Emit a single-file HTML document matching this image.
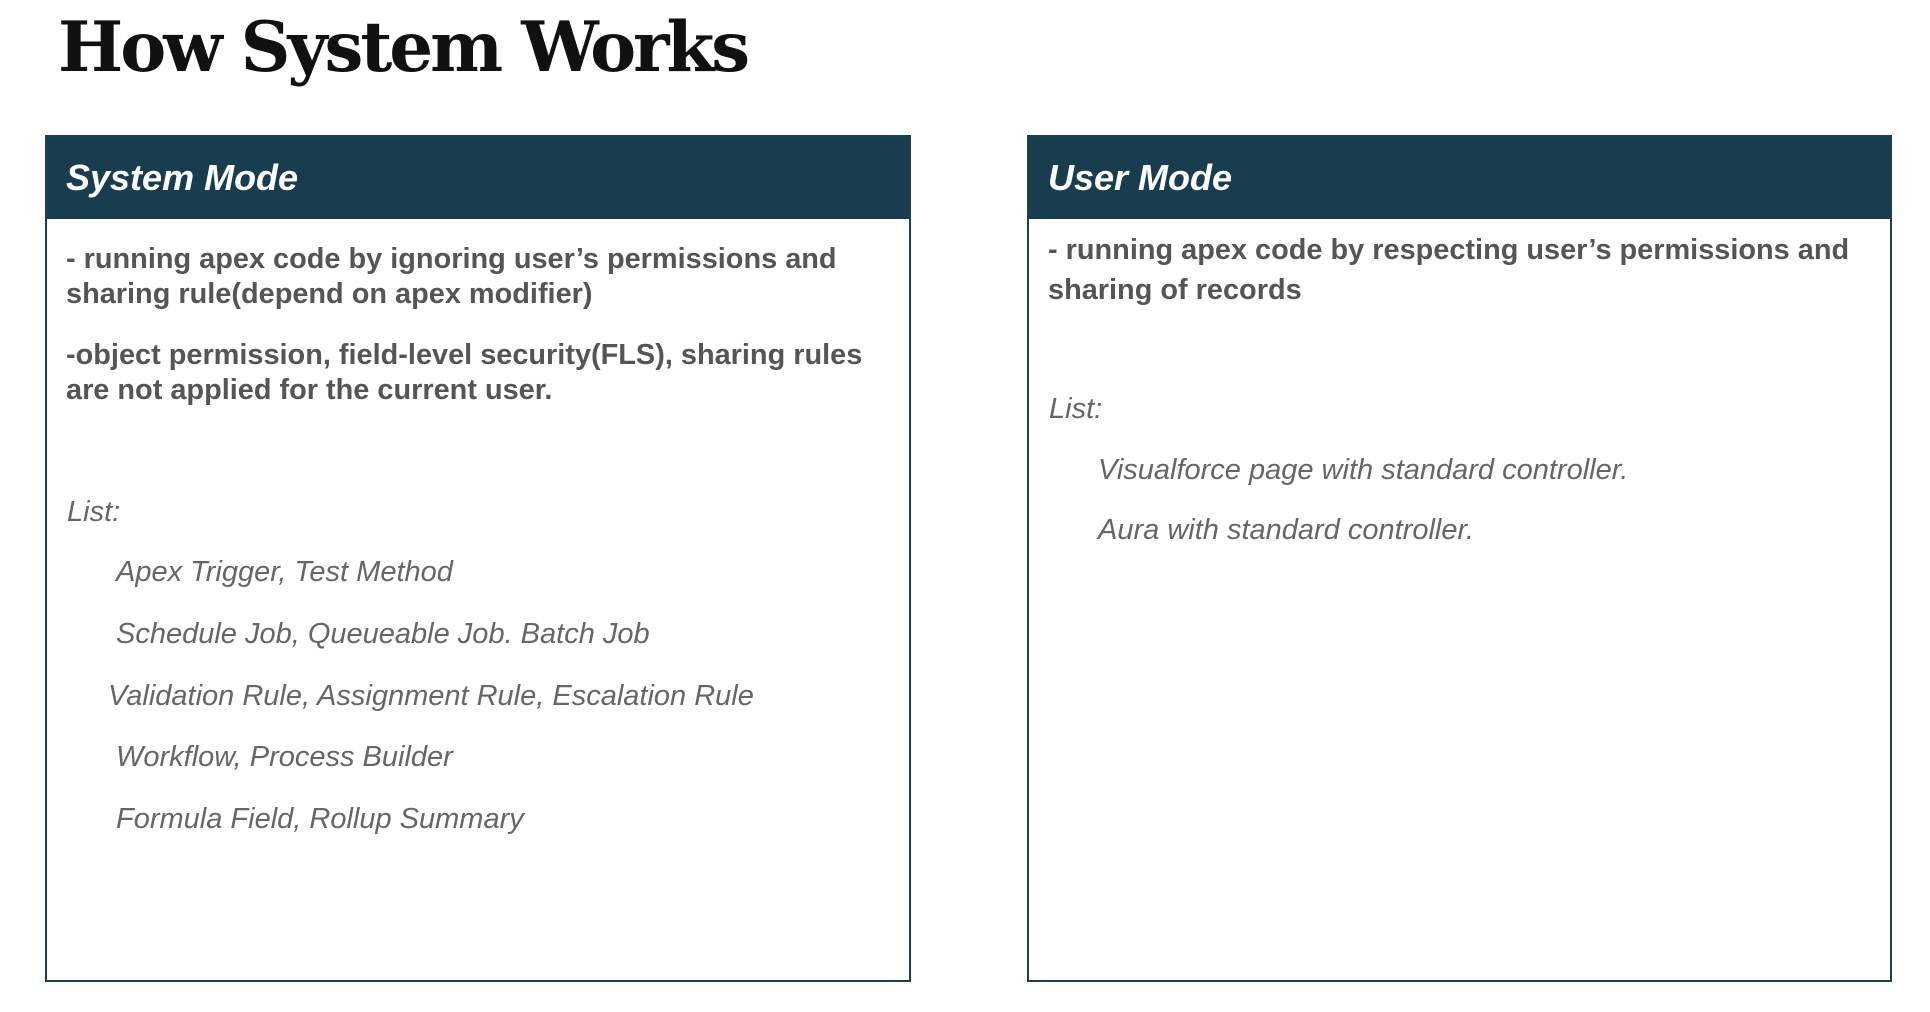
<!DOCTYPE html>
<html><head><meta charset="utf-8"><style>
body{margin:0;width:1930px;height:1012px;background:#fff;position:relative;overflow:hidden;font-family:"Liberation Sans",sans-serif}
.t{position:absolute;left:58px;top:-2px;font:bold 69px/100px "DejaVu Serif",serif;color:#111;letter-spacing:-3px;white-space:nowrap}
.box{position:absolute;border:2px solid #1d3f50;box-sizing:border-box}
.hd{position:absolute;left:0;top:0;right:0;height:82px;background:#183d4f}
.h{position:absolute;color:#fff;font:italic bold 36px "Liberation Sans",sans-serif;white-space:nowrap}
.b{position:absolute;color:#555;font:bold 28.9px "Liberation Sans",sans-serif;white-space:nowrap}
.i{position:absolute;color:#666;font:italic 29px "Liberation Sans",sans-serif;white-space:nowrap}
</style></head><body>
<div class="t">How System Works</div>
<div class="box" style="left:45px;top:135px;width:866px;height:847px"><div class="hd"></div></div>
<div class="box" style="left:1027px;top:135px;width:865px;height:847px"><div class="hd"></div></div>
<div class="h" style="left:66px;top:157px">System Mode</div>
<div class="h" style="left:1048px;top:157px">User Mode</div>
<div class="b" style="left:66px;top:243px">- running apex code by ignoring user’s permissions and</div>
<div class="b" style="left:66px;top:278px">sharing rule(depend on apex modifier)</div>
<div class="b" style="left:66px;top:339px">-object permission, field-level security(FLS), sharing rules</div>
<div class="b" style="left:66px;top:374px">are not applied for the current user.</div>
<div class="i" style="left:67px;top:496px">List:</div>
<div class="i" style="left:116px;top:556px">Apex Trigger, Test Method</div>
<div class="i" style="left:116px;top:618px">Schedule Job, Queueable Job. Batch Job</div>
<div class="i" style="left:108px;top:680px">Validation Rule, Assignment Rule, Escalation Rule</div>
<div class="i" style="left:116px;top:741px">Workflow, Process Builder</div>
<div class="i" style="left:116px;top:803px">Formula Field, Rollup Summary</div>
<div class="b" style="left:1048px;top:234px">- running apex code by respecting user’s permissions and</div>
<div class="b" style="left:1048px;top:274px">sharing of records</div>
<div class="i" style="left:1049px;top:393px">List:</div>
<div class="i" style="left:1098px;top:454px">Visualforce page with standard controller.</div>
<div class="i" style="left:1098px;top:514px">Aura with standard controller.</div>
</body></html>
